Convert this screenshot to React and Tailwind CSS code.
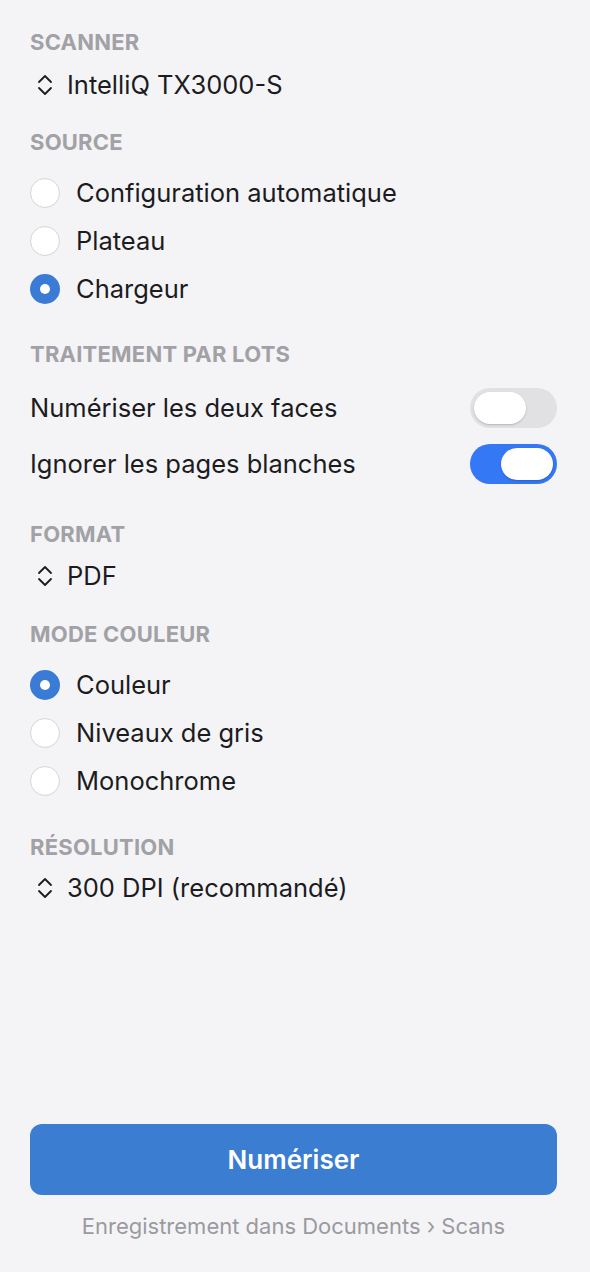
import { useState } from 'react'

const font = { fontFamily: 'Inter, "Noto Sans", sans-serif' }

function Label({ children }) {
  return (
    <h2 className="text-[22px] leading-[24px] font-bold tracking-[0.01em] text-[#a1a1a6] uppercase">{children}</h2>
  )
}

function Stepper({ value }) {
  return (
    <div className="flex items-center gap-[14px] pl-[7px] h-[32px]">
      <svg width="16" height="24" viewBox="0 0 16 24" fill="none" stroke="#1c1c1e" strokeWidth="1.8" strokeLinecap="round" strokeLinejoin="round">
        <path d="M2 9 L8 3 L14 9" />
        <path d="M2 15 L8 21 L14 15" />
      </svg>
      <span className="text-[25.5px] text-[#1c1c1e]">{value}</span>
    </div>
  )
}

function Radio({ label, checked, onClick }) {
  return (
    <button onClick={onClick} className="flex items-center gap-[16px] h-[48px] text-left">
      {checked ? (
        <span className="w-[30px] h-[30px] rounded-full bg-[#3a7bd5] flex items-center justify-center">
          <span className="w-[10px] h-[10px] rounded-full bg-white" />
        </span>
      ) : (
        <span className="w-[30px] h-[30px] rounded-full bg-white border border-[#d4d4d8]" />
      )}
      <span className="text-[25.5px] text-[#1c1c1e]">{label}</span>
    </button>
  )
}

function Toggle({ label, on, onClick }) {
  return (
    <div className="flex items-center justify-between h-[56px]">
      <span className="text-[25.5px] text-[#1c1c1e]">{label}</span>
      <button
        onClick={onClick}
        className={`w-[87px] h-[40px] rounded-full p-[4px] flex ${on ? 'bg-[#3478f6] justify-end' : 'bg-[#e1e1e4] justify-start'}`}
      >
        <span className="w-[52px] h-[32px] rounded-full bg-white shadow-[0_1px_2px_rgba(0,0,0,0.2)]" />
      </button>
    </div>
  )
}

export default function App() {
  const [source, setSource] = useState('Chargeur')
  const [mode, setMode] = useState('Couleur')
  const [duplex, setDuplex] = useState(false)
  const [skipBlank, setSkipBlank] = useState(true)

  return (
    <div style={font} className="min-h-[1272px] bg-[#f4f4f7] pl-[30px] pr-[33px] pt-[30px] pb-[31px] flex flex-col">
      <Label>Scanner</Label>
      <div className="mt-[15px]"><Stepper value="IntelliQ TX3000-S" /></div>

      <div className="mt-[29px]"><Label>Source</Label></div>
      <div className="mt-[15px] flex flex-col">
        {['Configuration automatique', 'Plateau', 'Chargeur'].map(s => (
          <Radio key={s} label={s} checked={source === s} onClick={() => setSource(s)} />
        ))}
      </div>

      <div className="mt-[29px]"><Label>Traitement par lots</Label></div>
      <div className="mt-[14px] flex flex-col">
        <Toggle label="Numériser les deux faces" on={duplex} onClick={() => setDuplex(!duplex)} />
        <Toggle label="Ignorer les pages blanches" on={skipBlank} onClick={() => setSkipBlank(!skipBlank)} />
      </div>

      <div className="mt-[30px]"><Label>Format</Label></div>
      <div className="mt-[14px]"><Stepper value="PDF" /></div>

      <div className="mt-[30px]"><Label>Mode couleur</Label></div>
      <div className="mt-[15px] flex flex-col">
        {['Couleur', 'Niveaux de gris', 'Monochrome'].map(s => (
          <Radio key={s} label={s} checked={mode === s} onClick={() => setMode(s)} />
        ))}
      </div>

      <div className="mt-[30px]"><Label>Résolution</Label></div>
      <div className="mt-[13px]"><Stepper value="300 DPI (recommandé)" /></div>

      <div className="mt-auto">
        <button className="w-full h-[71px] rounded-[12px] bg-[#3b7dd0] text-white text-[26px] font-semibold">
          Numériser
        </button>
        <p className="mt-[16px] text-center text-[22px] leading-[30px] text-[#9a9a9f]">
          Enregistrement dans Documents › Scans
        </p>
      </div>
    </div>
  )
}
